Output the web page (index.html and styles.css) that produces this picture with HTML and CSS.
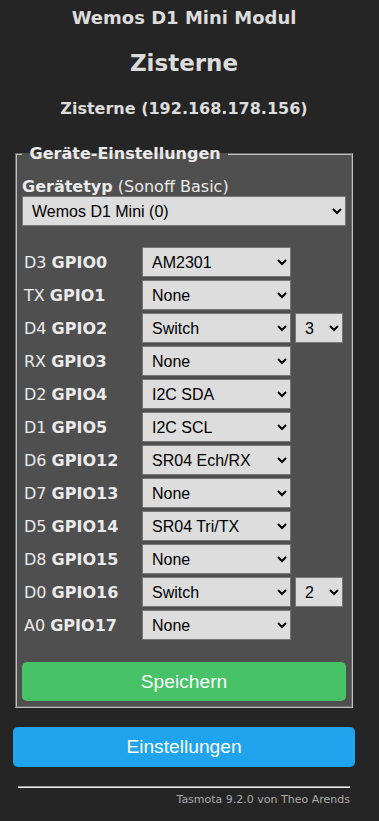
FILE: index.html
```
<!DOCTYPE html>
<html lang="de">
<head>
  <meta charset="UTF-8" />
  <meta name="viewport" content="width=device-width, initial-scale=1" />
  <title>Zisterne - Gerät konfigurieren</title>
  <link rel="stylesheet" href="styles.css">
</head>
<body>

  <div class="main">
    <div class="head">
      <h3>Wemos D1 Mini Modul</h3>
      <h2>Zisterne</h2>
      <h4>Zisterne (192.168.178.156)</h4>
    </div>

    <fieldset>
      <legend><b>&nbsp;Geräte-Einstellungen&nbsp;</b></legend>
      <form method="get" action="md">
        <div class="type"><b>Gerätetyp</b> (Sonoff Basic)</div>
        <select id="g99">
          <option>Wemos D1 Mini (0)</option>
        </select>

        <div class="gpio">
          <div class="row"><span class="pin">D3 <b>GPIO0</b></span><select><option>AM2301</option></select></div>
          <div class="row"><span class="pin">TX <b>GPIO1</b></span><select><option>None</option></select></div>
          <div class="row"><span class="pin">D4 <b>GPIO2</b></span><select><option>Switch</option></select><select class="idx"><option>3</option></select></div>
          <div class="row"><span class="pin">RX <b>GPIO3</b></span><select><option>None</option></select></div>
          <div class="row"><span class="pin">D2 <b>GPIO4</b></span><select><option>I2C SDA</option></select></div>
          <div class="row"><span class="pin">D1 <b>GPIO5</b></span><select><option>I2C SCL</option></select></div>
          <div class="row"><span class="pin">D6 <b>GPIO12</b></span><select><option>SR04 Ech/RX</option></select></div>
          <div class="row"><span class="pin">D7 <b>GPIO13</b></span><select><option>None</option></select></div>
          <div class="row"><span class="pin">D5 <b>GPIO14</b></span><select><option>SR04 Tri/TX</option></select></div>
          <div class="row"><span class="pin">D8 <b>GPIO15</b></span><select><option>None</option></select></div>
          <div class="row"><span class="pin">D0 <b>GPIO16</b></span><select><option>Switch</option></select><select class="idx"><option>2</option></select></div>
          <div class="row"><span class="pin">A0 <b>GPIO17</b></span><select><option>None</option></select></div>
        </div>

        <button type="submit" class="bgrn">Speichern</button>
      </form>
    </fieldset>

    <button class="back">Einstellungen</button>

    <div class="foot">
      <hr>
      <a href="#">Tasmota 9.2.0 von Theo Arends</a>
    </div>
  </div>

</body>
</html>
```

FILE: styles.css
```
body {
  margin: 8px;
  background: #252525;
  font-family: "DejaVu Sans", Verdana, sans-serif;
}
.main {
  width: 342px;
  padding: 5px;
  color: #eaeaea;
}
.head {
  text-align: center;
  margin-top: -6px;
}
.head h3 {
  font-size: 18px;
  margin: 0 0 22px 0;
  color: #dcdcdc;
}
.head h2 {
  font-size: 23px;
  margin: 0 0 23px 0;
  color: #dcdcdc;
}
.head h4 {
  font-size: 16px;
  margin: 0 0 26px 0;
  color: #dcdcdc;
}
fieldset {
  background: #4f4f4f;
  padding: 5px;
  margin: 0 2px;
  border: 2px groove #c0c0c0;
}
legend {
  font-size: 16px;
}
.type {
  margin-top: 10px;
  font-size: 16px;
  line-height: 18px;
}
select {
  display: block;
  width: 100%;
  height: 30px;
  padding: 0 5px;
  font-family: "Liberation Sans", Arial, sans-serif;
  font-size: 16px;
  background: #dddddd;
  color: #000;
  border: 1px solid #767676;
  border-radius: 0;
}
.gpio {
  margin-top: 21px;
  display: flex;
  flex-direction: column;
  gap: 3px;
  padding-left: 2px;
}
.row {
  display: flex;
  align-items: center;
  height: 30px;
}
.pin {
  width: 118px;
  font-size: 16px;
}
.row select {
  width: 149px;
}
.row select.idx {
  width: 48px;
  margin-left: 4px;
}
button {
  display: block;
  width: 100%;
  border: 0;
  border-radius: 0.3rem;
  background: #1fa3ec;
  color: #faffff;
  line-height: 40px;
  font-size: 1.2rem;
  font-family: "Liberation Sans", Arial, sans-serif;
  cursor: pointer;
  padding: 0;
}
button:hover {
  background: #0e70a4;
}
.bgrn {
  margin-top: 22px;
  line-height: 39px;
  background: #47c266;
}
.bgrn:hover {
  background: #5aaf6f;
}
.back {
  margin-top: 19px;
}
.foot {
  text-align: right;
  font-size: 11px;
  padding: 5px;
  margin-top: 6px;
}
.foot hr {
  margin: 8px 0 5px 0;
}
.foot a {
  color: #aaa;
  text-decoration: none;
}
```
